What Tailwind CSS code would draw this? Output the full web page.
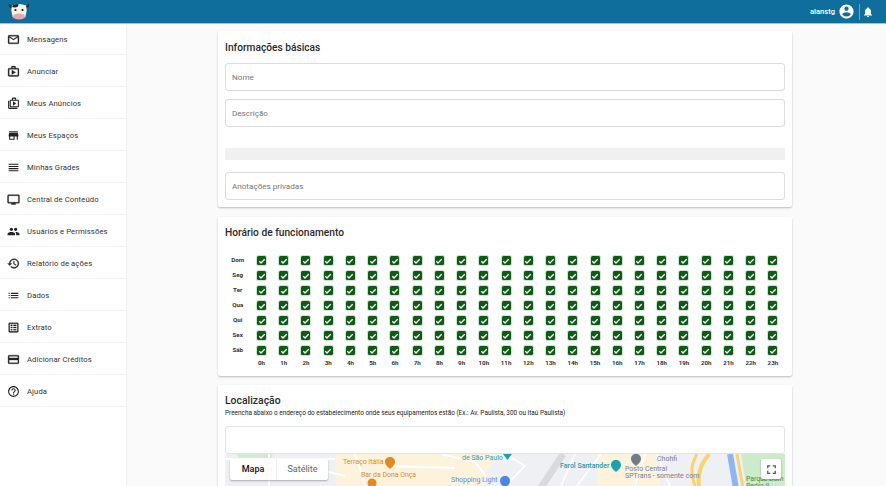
<!DOCTYPE html>
<html>
<head>
<meta charset="utf-8">
<script src="https://cdn.jsdelivr.net/npm/@tailwindcss/browser@4"></script>
</head>
<body class="m-0 overflow-hidden">
<div class="w-[886px] h-[486px] overflow-hidden flex flex-col bg-[#fafafa] font-['Roboto',sans-serif] text-[#212121]">
  <header class="h-[23px] shrink-0 bg-[#0f6e9b] shadow-[0_1px_0_#8fc8e0] relative z-10 flex items-center justify-between pl-[8px] pr-[12px]">
    <svg width="22" height="19" viewBox="0 0 22 19">
      <path d="M5 5 L1 1.5 L0.8 4 L3 6.5Z M17 5 L21 1.5 L21.2 4 L19 6.5Z" fill="#3a2d28"/>
      <path d="M4 3.5 Q11 0.5 18 3.5 Q19.5 8 18 12 L17.5 15 Q11 19 4.5 15 L4 12 Q2.5 8 4 3.5Z" fill="#f4f1ea"/>
      <path d="M5 3 Q8 2 10.5 2 L10 4.5 Q7 6 4 5Z" fill="#2a2523"/>
      <ellipse cx="11" cy="14.5" rx="6.2" ry="3" fill="#e8a6ac"/>
      <circle cx="7.5" cy="8" r="1.1" fill="#111"/><circle cx="14.5" cy="8" r="1.1" fill="#111"/>
    </svg>
    <div class="flex items-center text-white">
      <span class="text-[7.6px] font-medium mr-[3px]">alanstg</span>
      <svg width="17" height="17" viewBox="0 0 24 24" fill="#fff"><path d="M12 2C6.48 2 2 6.48 2 12s4.48 10 10 10 10-4.48 10-10S17.52 2 12 2zm0 3c1.66 0 3 1.34 3 3s-1.34 3-3 3-3-1.34-3-3 1.34-3 3-3zm0 14.2c-2.5 0-4.71-1.28-6-3.22.03-1.99 4-3.08 6-3.08 1.99 0 5.97 1.09 6 3.08-1.29 1.94-3.5 3.22-6 3.22z"/></svg>
      <div class="w-px h-[16px] bg-white/40 ml-[4px] mr-[2px]"></div>
      <svg width="12" height="12" viewBox="0 0 24 24" fill="#fff"><path d="M12 22c1.1 0 2-.9 2-2h-4c0 1.1.9 2 2 2zm6-6v-5c0-3.07-1.63-5.64-4.5-6.32V4c0-.83-.67-1.5-1.5-1.5s-1.5.67-1.5 1.5v.68C7.64 5.36 6 7.92 6 11v5l-2 2v1h16v-1l-2-2z"/></svg>
    </div>
  </header>
  <div class="flex flex-1 min-h-0">
    <nav class="w-[127px] shrink-0 bg-white border-r border-[#f0f0f0] text-[7.7px] text-[#333] tracking-[0.1px]">
      <a class="h-[32px] flex items-center border-b border-[#f2f2f2] pt-[2px] pl-[7px] gap-[7px]"><svg class="w-[13px] h-[13px]" viewBox="0 0 24 24" fill="#222"><path d="M20 4H4c-1.1 0-2 .9-2 2v12c0 1.1.9 2 2 2h16c1.1 0 2-.9 2-2V6c0-1.1-.9-2-2-2zm0 14H4V8l8 5 8-5v10zm-8-7L4 6h16l-8 5z" stroke="#222" stroke-width=".6"/></svg><span>Mensagens</span></a>
      <a class="h-[32px] flex items-center border-b border-[#f2f2f2] pt-[2px] pl-[7px] gap-[7px]"><svg class="w-[13px] h-[13px]" viewBox="0 0 24 24" fill="#222"><path d="M20 6h-4V4c0-1.1-.9-2-2-2h-4c-1.1 0-2 .9-2 2v2H4c-1.1 0-2 .9-2 2v11c0 1.1.9 2 2 2h16c1.1 0 2-.9 2-2V8c0-1.1-.9-2-2-2zM10 4h4v2h-4V4zm10 15H4V8h16v11zM9 9.5v8l7-4z" stroke="#222" stroke-width=".6"/></svg><span>Anunciar</span></a>
      <a class="h-[32px] flex items-center border-b border-[#f2f2f2] pt-[2px] pl-[7px] gap-[7px]"><svg class="w-[13px] h-[13px]" viewBox="0 0 24 24" fill="#222"><path d="M4 7H2v13c0 1.1.9 2 2 2h15v-2H4V7zm16-2h-3V3c0-1.1-.9-2-2-2h-4c-1.1 0-2 .9-2 2v2H7c-1.1 0-2 .9-2 2v10c0 1.1.9 2 2 2h13c1.1 0 2-.9 2-2V7c0-1.1-.9-2-2-2zm-9-2h4v2h-4V3zm9 14H7V7h13v10zm-9-1V8l6 4z"/></svg><span>Meus Anúncios</span></a>
      <a class="h-[32px] flex items-center border-b border-[#f2f2f2] pt-[2px] pl-[7px] gap-[7px]"><svg class="w-[13px] h-[13px]" viewBox="0 0 24 24" fill="#222"><path d="M20 4H4v2h16V4zm1 10v-2l-1-5H4l-1 5v2h1v6h10v-6h4v6h2v-6h1zm-9 4H6v-4h6v4z"/></svg><span>Meus Espaços</span></a>
      <a class="h-[32px] flex items-center border-b border-[#f2f2f2] pt-[2px] pl-[7px] gap-[7px]"><svg class="w-[13px] h-[13px]" viewBox="0 0 24 24" fill="#222"><path d="M3 15h18v-2H3v2zm0 4h18v-2H3v2zm0-8h18V9H3v2zm0-6v2h18V5H3z"/></svg><span>Minhas Grades</span></a>
      <a class="h-[32px] flex items-center border-b border-[#f2f2f2] pt-[2px] pl-[7px] gap-[7px]"><svg class="w-[13px] h-[13px]" viewBox="0 0 24 24" fill="#222"><path d="M21 3H3c-1.1 0-2 .9-2 2v12c0 1.1.9 2 2 2h5v2h8v-2h5c1.1 0 2-.9 2-2V5c0-1.1-.9-2-2-2zm0 14H3V5h18v12z" stroke="#222" stroke-width=".6"/></svg><span>Central de Conteúdo</span></a>
      <a class="h-[32px] flex items-center border-b border-[#f2f2f2] pt-[2px] pl-[7px] gap-[7px]"><svg class="w-[13px] h-[13px]" viewBox="0 0 24 24" fill="#222"><path d="M16 11c1.66 0 2.99-1.34 2.99-3S17.66 5 16 5c-1.66 0-3 1.34-3 3s1.34 3 3 3zm-8 0c1.66 0 2.99-1.34 2.99-3S9.66 5 8 5C6.34 5 5 6.34 5 8s1.34 3 3 3zm0 2c-2.33 0-7 1.17-7 3.5V19h14v-2.5c0-2.33-4.67-3.5-7-3.5zm8 0c-.29 0-.62.02-.97.05 1.16.84 1.97 1.97 1.97 3.45V19h6v-2.5c0-2.33-4.67-3.5-7-3.5z"/></svg><span>Usuários e Permissões</span></a>
      <a class="h-[32px] flex items-center border-b border-[#f2f2f2] pt-[2px] pl-[7px] gap-[7px]"><svg class="w-[13px] h-[13px]" viewBox="0 0 24 24" fill="#222"><path d="M13 3c-4.97 0-9 4.03-9 9H1l3.89 3.89.07.14L9 12H6c0-3.87 3.13-7 7-7s7 3.13 7 7-3.13 7-7 7c-1.93 0-3.68-.79-4.94-2.06l-1.42 1.42C8.27 19.99 10.51 21 13 21c4.97 0 9-4.03 9-9s-4.03-9-9-9zm-1 5v5l4.28 2.54.72-1.21-3.5-2.08V8H12z" stroke="#222" stroke-width=".5"/></svg><span>Relatório de ações</span></a>
      <a class="h-[32px] flex items-center border-b border-[#f2f2f2] pt-[2px] pl-[7px] gap-[7px]"><svg class="w-[13px] h-[13px]" viewBox="0 0 24 24" fill="#222"><path d="M3 13h2v-2H3v2zm0 4h2v-2H3v2zm0-8h2V7H3v2zm4 4h14v-2H7v2zm0 4h14v-2H7v2zM7 7v2h14V7H7z"/></svg><span>Dados</span></a>
      <a class="h-[32px] flex items-center border-b border-[#f2f2f2] pt-[2px] pl-[7px] gap-[7px]"><svg class="w-[13px] h-[13px]" viewBox="0 0 24 24" fill="#222"><path d="M19 3H5c-1.1 0-2 .9-2 2v14c0 1.1.9 2 2 2h14c1.1 0 2-.9 2-2V5c0-1.1-.9-2-2-2zm0 16H5V5h14v14zM7 7h3v2H7V7zm0 4h3v2H7v-2zm0 4h3v2H7v-2zm5-8h5v2h-5V7zm0 4h5v2h-5v-2zm0 4h5v2h-5v-2z" stroke="#222" stroke-width=".4"/></svg><span>Extrato</span></a>
      <a class="h-[32px] flex items-center border-b border-[#f2f2f2] pt-[2px] pl-[7px] gap-[7px]"><svg class="w-[13px] h-[13px]" viewBox="0 0 24 24" fill="#222"><path d="M20 4H4c-1.11 0-2 .89-2 2v12c0 1.11.89 2 2 2h16c1.11 0 2-.89 2-2V6c0-1.11-.89-2-2-2zm0 14H4v-5h16v5zm0-9H4V6h16v3z" stroke="#222" stroke-width=".6"/></svg><span>Adicionar Créditos</span></a>
      <a class="h-[32px] flex items-center border-b border-[#f2f2f2] pt-[2px] pl-[7px] gap-[7px]"><svg class="w-[13px] h-[13px]" viewBox="0 0 24 24" fill="#222"><path d="M11 18h2v-2h-2v2zm1-16C6.48 2 2 6.48 2 12s4.48 10 10 10 10-4.48 10-10S17.52 2 12 2zm0 18c-4.41 0-8-3.59-8-8s3.59-8 8-8 8 3.59 8 8-3.59 8-8 8zm0-14c-2.21 0-4 1.79-4 4h2c0-1.1.9-2 2-2s2 .9 2 2c0 2-3 1.75-3 5h2c0-2.25 3-2.5 3-5 0-2.21-1.79-4-4-4z"/></svg><span>Ajuda</span></a>
    </nav>
    <main class="flex-1 min-w-0 pl-[91px] pr-[94px] pt-[8px]">
      <section class="h-[176px] bg-white rounded-[2px] shadow-[0_1px_2px_rgba(0,0,0,0.25)] px-[7px] pt-[10px]">
        <h2 class="text-[10.2px] font-medium leading-[13px] text-[#2a2a2a] mb-[9px]">Informações básicas</h2>
        <div class="h-[28px] border border-[#dcdcdc] rounded-[3px] flex items-center px-[6px] text-[8.1px] text-[#777] mb-[8px]">Nome</div>
        <div class="h-[28px] border border-[#dcdcdc] rounded-[3px] flex items-center px-[6px] text-[8.1px] text-[#777] mb-[21px]">Descrição</div>
        <div class="h-[12px] bg-[#f0f0f0] mb-[12px]"></div>
        <div class="h-[28px] border border-[#dcdcdc] rounded-[3px] flex items-center px-[6px] text-[8.1px] text-[#777]">Anotações privadas</div>
      </section>
      <section class="h-[159px] mt-[10px] bg-white rounded-[2px] shadow-[0_1px_2px_rgba(0,0,0,0.25)] pl-[7px] pt-[9px]">
        <h2 class="text-[10.2px] font-medium leading-[13px] text-[#2a2a2a] mb-[14px]">Horário de funcionamento</h2>
        <div id="grid" class="grid grid-cols-[25.4px_repeat(24,22.24px)] auto-rows-[15px] items-center justify-items-center text-[6.2px] font-bold text-[#333]"></div>
      </section>
      <section class="h-[110px] mt-[9px] bg-white rounded-[2px] shadow-[0_1px_2px_rgba(0,0,0,0.25)] px-[7px] pt-[9px]">
        <h2 class="text-[10.4px] font-medium leading-[13px] text-[#2a2a2a] mb-[2px]">Localização</h2>
        <p class="text-[6.43px] leading-[9px] text-[#222] mb-[8px]">Preencha abaixo o endereço do estabelecimento onde seus equipamentos estão (Ex.: Av. Paulista, 300 ou Itaú Paulista)</p>
        <div class="h-[28px] border border-[#e4e4e4] rounded-[3px] bg-white relative z-10"></div>
        <div class="relative h-[60px] bg-[#eef0f3] overflow-hidden">
          <svg class="absolute left-0 top-0" width="560" height="60" viewBox="0 0 560 60" fill="none">
            <path d="M110 0H272L262 20 240 60H112Z" fill="#fdf3dc"/>
            <path d="M372 0H430L440 60H372Z" fill="#fdf3dc"/>
            <path d="M516 0H560V60H526Z" fill="#cdeac9"/>
            <path d="M12 0H48L46 4H14Z" fill="#d3ead3"/>
            <path d="M-5 5H110M44 0V60M130 0L150 60M160 12L230 14M88 14L120 22M216 0L250 8L262 24L240 60" stroke="#fff" stroke-width="2"/>
            <path d="M280 0L300 12L280 32M350 0L336 32M376 0L352 32M420 0L410 32M432 0L445 32" stroke="#fff" stroke-width="1.6"/>
            <path d="M338 0L312 40" stroke="#d8dadd" stroke-width="7"/>
            <path d="M484 0C478 8 472 16 474 32" stroke="#fbd26b" stroke-width="4"/>
            <path d="M472 0C468 8 464 14 470 32" stroke="#fbd26b" stroke-width="3"/>
            <path d="M505 0L512 40" stroke="#8fb4f5" stroke-width="6"/>
            <path d="M512 0L519 40" stroke="#fbd26b" stroke-width="3"/>
            <path d="M165 3c-3 0-5 2-5 5 0 3 3 5 5 7 2-2 5-4 5-7 0-3-2-5-5-5z" fill="#e8891f"/>
            <circle cx="147" cy="29" r="4.5" fill="#e8891f"/>
            <path d="M278 0h9l-4.500 6z" fill="#1aa3ad"/>
            <path d="M280 22c-3 0-5 2-5 5 0 3 3 5 5 7 2-2 5-4 5-7 0-3-2-5-5-5z" fill="#4a86e8"/>
            <path d="M391 6c-3 0-5 2-5 5 0 3 3 5 5 7 2-2 5-4 5-7 0-3-2-5-5-5z" fill="#1aa3ad"/>
            <path d="M411 0c-3 0-5 2-5 5 0 3 3 5 5 7 2-2 5-4 5-7 0-3-2-5-5-5z" fill="#6f7c8c"/>
          </svg>
          <div class="absolute left-[5px] top-[5px] h-[21px] w-[98px] bg-white rounded-[2px] shadow-[0_1px_2px_rgba(0,0,0,0.3)] flex items-center text-[9px]">
            <span class="w-[46px] text-center font-medium text-[#111]">Mapa</span>
            <span class="w-px h-full bg-[#eee]"></span>
            <span class="flex-1 text-center text-[#666]">Satélite</span>
          </div>
          <span class="absolute left-[118px] top-[4px] text-[#d98a2b] text-[7px] leading-[8px]">Terraço Itália</span>
          <span class="absolute left-[136px] top-[17px] text-[#d98a2b] text-[6.9px] leading-[8px]">Bar da Dona Onça</span>
          <span class="absolute left-[237px] top-[0px] text-[#3a9fa8] text-[7px] leading-[8px]">de São Paulo</span>
          <span class="absolute left-[226px] top-[22px] text-[#5b8fe0] text-[7px] leading-[8px]">Shopping Light</span>
          <span class="absolute left-[335px] top-[8px] text-[#1f9aa8] text-[7px] leading-[8px] font-medium">Farol Santander</span>
          <span class="absolute left-[432px] top-[1px] text-[#7a8088] text-[7px] leading-[8px]">Chohfi</span>
          <span class="absolute left-[400px] top-[12px] text-[#7a8088] text-[7px] leading-[7px]">Posto Central<br>SPTrans - somente com</span>
          <span class="absolute left-[521px] top-[22px] text-[#3e8f5a] text-[6.8px] leading-[7px] w-[38px]">Parque Dom Pedro II</span>
          <div class="absolute right-[4px] top-[5px] w-[20px] h-[20px] bg-white rounded-[2px] shadow-[0_1px_2px_rgba(0,0,0,0.3)] flex items-center justify-center"><svg width="15" height="15" viewBox="0 0 24 24" fill="#555"><path d="M7 14H5v5h5v-2H7v-3zm-2-4h2V7h3V5H5v5zm12 7h-3v2h5v-5h-2v3zM14 5v2h3v3h2V5h-5z"/></svg></div>
        </div>
      </section>
    </main>
  </div>
</div>
<script>
const days=['Dom','Seg','Ter','Qua','Qui','Sex','Sáb'];
let h='';
const box='<span class="w-[9px] h-[9px] rounded-[1.5px] bg-[#0d5c13] ring-1 ring-[#cfe0d0] flex items-center justify-center"><svg width="8" height="8" viewBox="0 0 24 24" fill="none" stroke="#fff" stroke-width="4"><path d="M4 13l5 5L20 7"/></svg></span>';
for(const d of days){h+='<span>'+d+'</span>';for(let i=0;i<24;i++)h+=box;}
h+='<span></span>';for(let i=0;i<24;i++)h+='<span class="pb-[4px]">'+i+'h</span>';
document.getElementById('grid').innerHTML=h;
</script>
</body>
</html>
